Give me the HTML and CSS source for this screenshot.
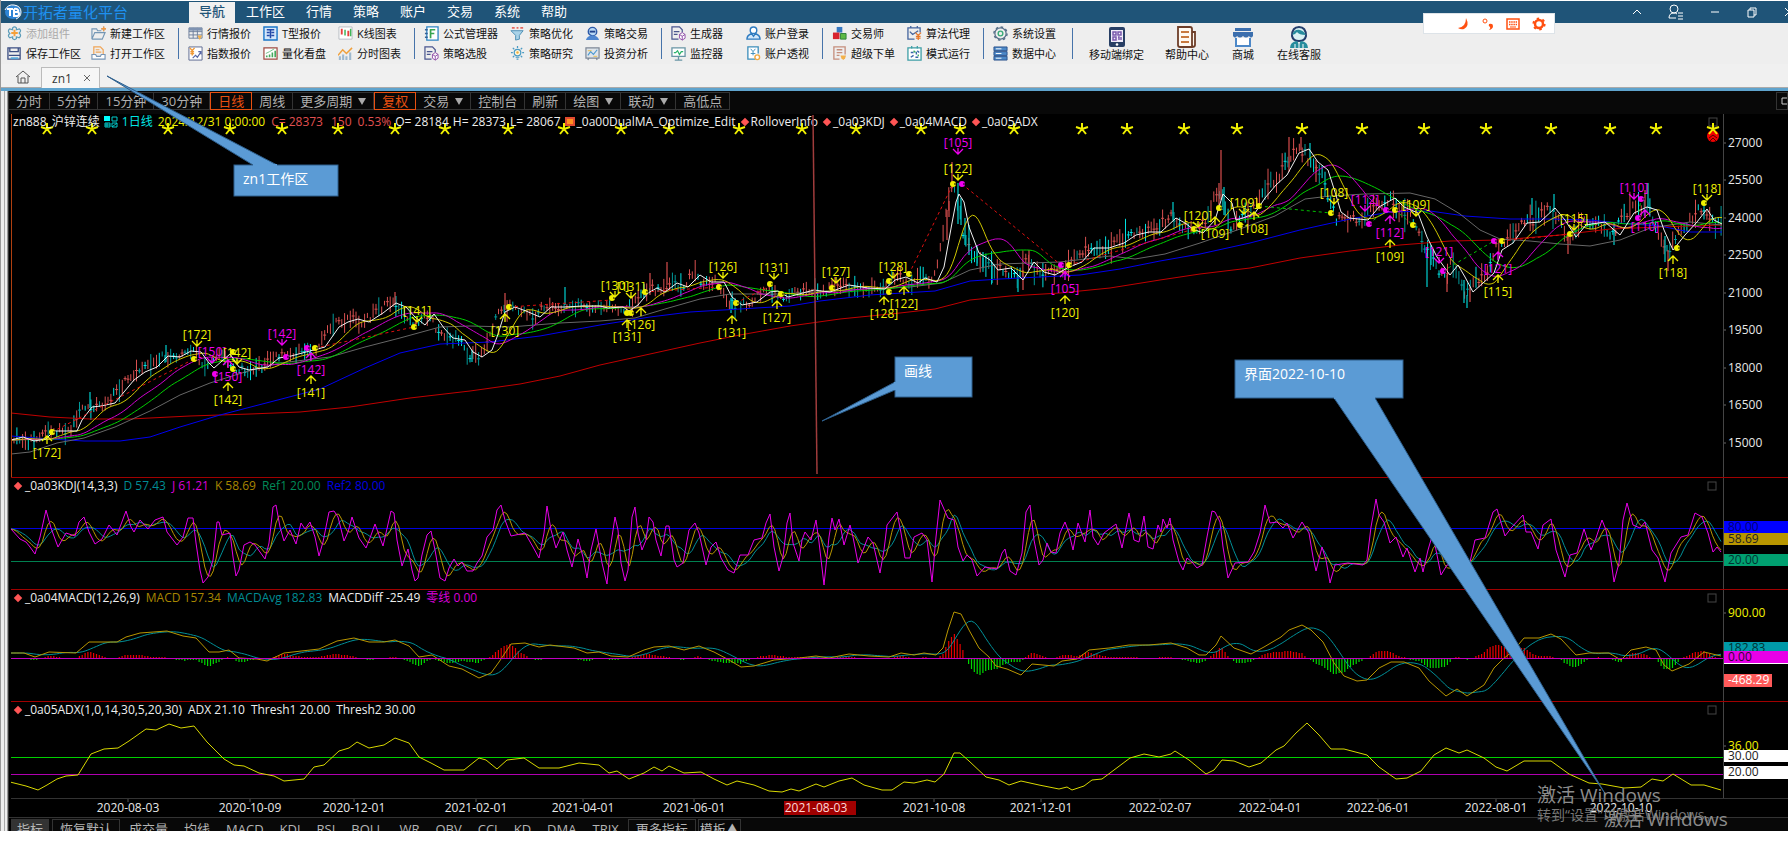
FILE: index.html
```html
<!DOCTYPE html>
<html lang="zh-CN">
<head>
  <meta charset="UTF-8">
  <meta name="viewport" content="width=device-width, initial-scale=1.0">
  <title>开拓者量化平台</title>
  <link rel="stylesheet" href="styles.css">
</head>
<body>
<div class="app" id="app">
  <header class="titlebar">
    <div class="brand">
      <svg width="18" height="16" viewBox="0 0 18 16"><ellipse cx="9" cy="8" rx="8" ry="7" fill="#2f86d6"/><path d="M1 6Q4 0 10 1Q17 2 17 8Q17 13 12 15" fill="none" stroke="#fff" stroke-width="1"/><path d="M3 5h6M6 5v7M10 5v7h3q2 0 2-2t-2-2h-2h2q2 0 1-2t-4-1" fill="none" stroke="#fff" stroke-width="2"/></svg>
      <span>开拓者量化平台</span>
    </div>
    <nav class="menu">
      <button class="active">导航</button>
      <button>工作区</button>
      <button>行情</button>
      <button>策略</button>
      <button>账户</button>
      <button>交易</button>
      <button>系统</button>
      <button>帮助</button>
    </nav>
    <div class="window-tools">
      <button aria-label="收起"><svg width="12" height="12" viewBox="0 0 12 12"><path d="M2 8l4-4 4 4"/></svg></button>
      <button aria-label="用户"><svg width="16" height="16" viewBox="0 0 16 16"><circle cx="6" cy="5" r="4"/><path d="M1 14q0-5 5-5 2 0 3 1M1 14h7M10 9h5M10 12h5M10 15h5"/></svg></button>
      <button aria-label="最小化"><svg width="12" height="12" viewBox="0 0 12 12"><path d="M2 6h8"/></svg></button>
      <button aria-label="还原"><svg width="12" height="12" viewBox="0 0 12 12"><path d="M2 4h6v7h-6zM4 4v-2h6v7h-2"/></svg></button>
      <button aria-label="关闭"><svg width="12" height="12" viewBox="0 0 12 12"><path d="M2 2l8 8M10 2l-8 8"/></svg></button>
    </div>
    <div class="ime">
      <svg width="12" height="12" viewBox="0 0 12 12"><path d="M8 0q4 8-2 11-3 1-6-1Q8 9 8 0z" fill="#ff5011"/></svg>
      <svg width="12" height="12" viewBox="0 0 12 12"><circle cx="3" cy="3" r="2" fill="none" stroke="#ff5011" stroke-width="1"/><path d="M7 6q4-1 4 2t-4 4q2-2 1-3-2-1-1-3z" fill="#ff5011"/></svg>
      <svg width="14" height="12" viewBox="0 0 14 12"><rect x="1" y="1" width="12" height="10" fill="none" stroke="#ff5011" stroke-width="1.5"/><path d="M3 4h8M3 6.500h8" stroke="#ff5011" stroke-width="1.500" stroke-dasharray="1.500 .7"/><path d="M4 9h6" stroke="#ff5011"/></svg>
      <svg width="14" height="14" viewBox="0 0 14 14"><circle cx="7" cy="7" r="4" fill="none" stroke="#ff5011" stroke-width="2.500"/><circle cx="7" cy="7" r="5.600" fill="none" stroke="#ff5011" stroke-width="2" stroke-dasharray="2.400 3.460"/></svg>
    </div>
  </header>

  <div class="ribbon">
    <div class="group">
      <button class="off"><svg viewBox="0 0 16 16"><path d="M6 2q2-2 4 0v2l3-1q3 2 0 4.500 3 3 0 5l-3-1v2q-2 2-4 0v-2l-3 1q-3-2 0-4.500-3-3 0-5l3 1z" fill="none" stroke="#5c9cb8" stroke-width="1.300"/><path d="M8 4v7M4.500 7.500h7" stroke="#f5a03a" stroke-width="2"/></svg>添加组件</button>
      <button><svg viewBox="0 0 16 16"><path d="M1 14V3h5l1 2h4M1 14h11l3-7H4L1 14M11 3h5M13.500 .5v5" fill="none" stroke="#7497b5" stroke-width="1.200"/><path d="M11 3h5M13.500 .5v5" stroke="#f09a45" stroke-width="1.500"/></svg>新建工作区</button>
      <button><svg viewBox="0 0 16 16"><path d="M1 2h13v12H1zM3 2v4h9V2M2 10h12" fill="none" stroke="#3c4f84" stroke-width="1.400"/><path d="M4 13h8" stroke="#58a8d8" stroke-width="2"/></svg>保存工作区</button>
      <button><svg viewBox="0 0 16 16"><path d="M3 9V1h7l3 3v5M5 4h4M5 6.500h6" fill="none" stroke="#f0a557" stroke-width="1.300"/><path d="M1 9h4l1 2h4l1-2h4v5H1z" fill="#fff" stroke="#7795b5" stroke-width="1.200"/></svg>打开工作区</button>
    </div>
    <div class="group">
      <button><svg viewBox="0 0 16 16"><path d="M1 2h14v11H1zM1 6h14M1 9.500h14M5.500 2v11M10 2v11" fill="none" stroke="#6d7f9c"/><path d="M1 2h14v3H1z" fill="#7f93b2"/><path d="M10 10h5l-2.500 5z" fill="#f2b14d"/></svg>行情报价</button>
      <button><svg viewBox="0 0 16 16"><path d="M1 1h14v14H1z" fill="#d5e8fb" stroke="#1b76c8" stroke-width="1.500"/><path d="M4 4h8M8 4v9M4 7h3M9 7h3M4 10h3M9 10h3" stroke="#2449a8" stroke-width="1.600"/></svg>T型报价</button>
      <button><svg viewBox="0 0 16 16"><path d="M1 1h14v13H1z" fill="#fff" stroke="#b7bcc3"/><path d="M4 3v6M11 5v6" stroke="#e8413d" stroke-width="2"/><path d="M7.500 4v6M13.500 3v8" stroke="#41b65a" stroke-width="1.600"/></svg>K线图表</button>
      <button><svg viewBox="0 0 16 16"><path d="M1 1h14v14H1z" fill="#fff" stroke="#5a6790"/><path d="M2 2l2.500 3L7 2M4.500 5v5M2.500 6h4M2.500 8h4" fill="none" stroke="#f19a37" stroke-width="1.500"/><path d="M5 13l3-3 2 2 4-6M11 6h3v3" fill="none" stroke="#5666a5" stroke-width="1.200"/></svg>指数报价</button>
      <button><svg viewBox="0 0 16 16"><path d="M1 2h14v12H1z" fill="#fff" stroke="#a04b42" stroke-width="1.300"/><path d="M4 12v-2M7 12V9M10 12V7M13 12V5" stroke="#43a95c" stroke-width="1.700"/><path d="M3 8l4-2 5-3" fill="none" stroke="#6cbf84"/></svg>量化看盘</button>
      <button><svg viewBox="0 0 16 16"><path d="M0 10l5-6 4 4 6-6" fill="none" stroke="#f0a03c" stroke-width="1.600"/><path d="M2 15v-4M5.500 15V9M9 15v-4M13 15V7" stroke="#9db8ce" stroke-width="2.200"/></svg>分时图表</button>
    </div>
    <div class="group">
      <button><svg viewBox="0 0 16 16"><path d="M3 1h12v14H3z" fill="#fff" stroke="#2f85c4" stroke-width="1.400"/><path d="M1 4h3M1 8h3M1 12h3" stroke="#356195" stroke-width="1.500"/><path d="M7 13V4h5M7 8h4" fill="none" stroke="#37a550" stroke-width="1.800"/></svg>公式管理器</button>
      <button><svg viewBox="0 0 16 16"><path d="M1 5h13l-4 5v4l-4 1v-5z" fill="#a9d2e8" stroke="#4d8fb4"/><path d="M2 2h3M7 2h2M11 2h3" stroke="#e66a60" stroke-width="2"/></svg>策略优化</button>
      <button><svg viewBox="0 0 16 16"><circle cx="8" cy="6" r="4.500" fill="#b9d9f5" stroke="#2d5aa8" stroke-width="1.500"/><path d="M1 15q1-5 7-5t7 5z" fill="#4e86d0"/><path d="M5 6h6" stroke="#20428c" stroke-width="2"/></svg>策略交易</button>
      <button><svg viewBox="0 0 16 16"><path d="M8 14H1V1h8l3 3v3M3 6h6M3 9h4" fill="none" stroke="#4a568f" stroke-width="1.300"/><path d="M12 7l3 2v4l-3 2-3-2V9zM9 9l3 2 3-2M12 11v4" fill="#fff" stroke="#8e4ca8"/></svg>策略选股</button>
      <button><svg viewBox="0 0 16 16"><circle cx="8" cy="7" r="3.500" fill="#fff7dc" stroke="#4a9bc4" stroke-width="1.300"/><path d="M6 12h4M7 14h2M8 0v2M1 7h2M13 7h2M3 2l1.500 1.500M13 2l-1.500 1.500M3 12l1.500-1.500M13 12l-1.500-1.500" stroke="#4a9bc4" stroke-width="1.300"/><circle cx="8" cy="7" r="1.300" fill="#f1ae3f"/></svg>策略研究</button>
      <button><svg viewBox="0 0 16 16"><path d="M1 2h14v11H1zM4 13l-1 2M12 13l1 2" fill="#dfe4ea" stroke="#7d8796" stroke-width="1.300"/><path d="M3 10l3-4 3 3 4-5" fill="none" stroke="#4d9ad0" stroke-width="1.200"/><path d="M3 5h4M9 11h4" stroke="#e9bd49"/></svg>投资分析</button>
    </div>
    <div class="group">
      <button><svg viewBox="0 0 16 16"><path d="M8 14H1V1h8l3 3v3M3 6h6M3 9h4" fill="none" stroke="#4a568f" stroke-width="1.300"/><path d="M12 7l3 2v4l-3 2-3-2V9zM9 9l3 2 3-2M12 11v4" fill="#fff" stroke="#8e4ca8"/></svg>生成器</button>
      <button><svg viewBox="0 0 16 16"><circle cx="8" cy="4.500" r="3.500" fill="#fff" stroke="#2e7bc0" stroke-width="1.500"/><path d="M1 14q0-4 5-6l2 3 2-3q5 2 5 6z" fill="#d3e8fa" stroke="#2e7bc0" stroke-width="1.500"/></svg>账户登录</button>
      <button><svg viewBox="0 0 16 16"><path d="M1 2h14v9H1zM4 15h8M8 11v4" fill="#fff" stroke="#6895a5" stroke-width="1.400"/><path d="M3 7h2l2-2 2 4 2-3h2" fill="none" stroke="#2bb26b" stroke-width="1.300"/></svg>监控器</button>
      <button><svg viewBox="0 0 16 16"><path d="M10 14H2V1h11v7" fill="#fff" stroke="#3c8ebb" stroke-width="1.400"/><path d="M5 3l2.500 3L10 3M7.500 6v4M5 8h5" fill="none" stroke="#3c8ebb"/><circle cx="12" cy="12" r="2.500" fill="#fff" stroke="#efa943" stroke-width="1.500"/></svg>账户透视</button>
    </div>
    <div class="group">
      <button><svg viewBox="0 0 16 16"><path d="M5 1h6v6H5z" fill="#3677c0"/><path d="M1 7h7v7H1z" fill="#d8232f"/><path d="M9 8h6v6H9z" fill="#5db944" stroke="#2d7f38"/></svg>交易师</button>
      <button><svg viewBox="0 0 16 16"><path d="M8 14H1V2h13v5M4 2V0M11 2V0M3 6l3 3 6-4" fill="none" stroke="#44659e" stroke-width="1.400"/><path d="M9 7l3 3 3-3M12 10v5M9.500 11h5M9.500 13h5" stroke="#e87728" stroke-width="1.300" fill="none"/></svg>算法代理</button>
      <button><svg viewBox="0 0 16 16"><path d="M8 14H2V1h12v8M5 4h6M5 7h6M5 10h3" fill="none" stroke="#c58e7c" stroke-width="1.400"/><path d="M9 10h6l-1 3-2 2-2-2z" fill="#f3b04a"/></svg>超级下单</button>
      <button><svg viewBox="0 0 16 16"><path d="M1 2h14v13H1zM5 0v3M11 0v3" fill="#fff" stroke="#3f9fa6" stroke-width="1.400"/><path d="M4 7h3M4 12l3-2M10 6v3M9 12h3M11 5l2 2" stroke="#3766a8" stroke-width="1.500"/><path d="M7 5l2 2M12 9v2" stroke="#3fae67" stroke-width="1.500"/></svg>模式运行</button>
    </div>
    <div class="group">
      <button><svg viewBox="0 0 16 16"><circle cx="8" cy="8" r="6" fill="none" stroke="#566f88" stroke-width="1.300"/><circle cx="8" cy="8" r="7" fill="none" stroke="#566f88" stroke-width="1.500" stroke-dasharray="2.700 2.790"/><circle cx="8" cy="8" r="2.500" fill="none" stroke="#3bac79" stroke-width="1.500"/></svg>系统设置</button>
      <button><svg viewBox="0 0 16 16"><path d="M1 1h14v4H1zM1 6h14v4H1zM1 11h14v4H1z" fill="#4c89c8" stroke="#2b528c"/><path d="M3 3h6M3 8h6M3 13h6" stroke="#fff"/></svg>数据中心</button>
    </div>
    <div class="big-group">
      <button><svg viewBox="0 0 22 22"><rect x="3" y="1" width="16" height="20" rx="2" fill="#283f65"/><path d="M5 4h12v12H5z" fill="#f1ecfa"/><path d="M7 6h3v3H7zM12 6h3v3h-3zM7 11h3v3H7zM12 11h1v3M15 11v3" fill="none" stroke="#7959ad" stroke-width="1.500"/><circle cx="11" cy="18.500" r="1.300" fill="#fff"/></svg>移动端绑定</button>
      <button><svg viewBox="0 0 22 22"><path d="M2 1h12q2 0 2 2v18H4q-2 0-2-2zM16 6h3v13q0 2-3 2" fill="#fff9f2" stroke="#6d3d28" stroke-width="1.800"/><path d="M5 6h8M5 11h8M5 16h8" stroke="#c8793f" stroke-width="1.800"/></svg>帮助中心</button>
      <button><svg viewBox="0 0 22 22"><path d="M3 2h16v3H3z" fill="#3c6fae"/><path d="M1 6h20v4q-2 3-4 0-3 3-6 0-3 3-6 0-2 3-4 0z" fill="#3c6fae"/><path d="M4 12v8h14v-8" fill="#fff" stroke="#4d88c8" stroke-width="2"/></svg>商城</button>
      <button><svg viewBox="0 0 22 22"><path d="M4 10q0-9 7-9t7 9q-1 5-7 5t-7-5z" fill="#d9f1f3" stroke="#243e6c" stroke-width="2"/><path d="M4 9q2-6 8-5 4 1 6 5-7 0-9-3-2 3-5 3z" fill="#278c9d"/><path d="M2 22q0-6 7-7l2 3 2-3q7 1 7 7z" fill="#278c9d"/><path d="M11 17v5M7 18v4M15 18v4" stroke="#fff"/></svg>在线客服</button>
    </div>
  </div>

  <div class="tabs">
    <button class="home" aria-label="首页"><svg width="16" height="14" viewBox="0 0 16 14"><path d="M1 7l7-6 7 6M3 6v7h10V6M6 13V8h4v5" fill="none" stroke="#555" stroke-width="1"/></svg></button>
    <button class="tab">zn1 <svg width="8" height="8" viewBox="0 0 8 8"><path d="M1 1l6 6M7 1l-6 6" stroke="#666" stroke-width="1"/></svg></button>
  </div>

  <main class="workspace">
    <div class="toolbar">
      <button>分时</button><button>5分钟</button><button>15分钟</button><button>30分钟</button><button class="on">日线</button><button>周线</button><button>更多周期<i></i></button><button class="on">复权</button><button>交易<i></i></button><button>控制台</button><button>刷新</button><button>绘图<i></i></button><button>联动<i></i></button><button>高低点</button>
      <button class="restore" aria-label="最大化"><svg width="10" height="8" viewBox="0 0 10 8"><path d="M1 1h8v6H1z" fill="none" stroke="#ccc"/></svg></button>
    </div>

    <section class="panel price">
      <div class="legend legend-price">
        <span>zn888_沪锌连续</span>
        <svg width="14" height="12" viewBox="0 0 14 12"><path d="M0 0h6v5H0z" fill="#0ff"/><path d="M8 1h5v4H8zM1 7h5v4H1zM8 7h5v4H8zM3 7v4M1 9h5M8 11l5-4" fill="none" stroke="#0cc"/></svg>
        <span class="cyan">1日线</span>
        <span class="yellow date">2024/12/31 0:00:00</span>
        <span class="coral">C= 28373</span><span class="coral gap">150</span><span class="coral">0.53%</span>
        <span>O= 28184</span><span>H= 28373</span><span>L= 28067</span>
        <span class="study"><b class="square"></b>_0a00DualMA_Optimize_Edit</span>
        <span class="study"><b></b>RolloverInfo</span>
        <span class="study"><b></b>_0a03KDJ</span>
        <span class="study"><b></b>_0a04MACD</span>
        <span class="study"><b></b>_0a05ADX</span>
      </div>
      <svg class="plot" id="price"></svg>
      <svg class="axis" id="priceAxis"></svg>
    </section>

    <section class="panel">
      <div class="legend"><span class="study"><b></b>_0a03KDJ(14,3,3)</span><span class="teal">D 57.43</span><span class="magenta">J 61.21</span><span class="gold">K 58.69</span><span class="green">Ref1 20.00</span><span class="blue">Ref2 80.00</span></div>
      <svg class="plot" id="kdj"></svg>
      <svg class="axis" id="kdjAxis"></svg>
    </section>

    <section class="panel">
      <div class="legend"><span class="study"><b></b>_0a04MACD(12,26,9)</span><span class="gold">MACD 157.34</span><span class="teal">MACDAvg 182.83</span><span>MACDDiff -25.49</span><span class="magenta">零线 0.00</span></div>
      <svg class="plot" id="macd"></svg>
      <svg class="axis" id="macdAxis"></svg>
    </section>

    <section class="panel adx">
      <div class="legend"><span class="study"><b></b>_0a05ADX(1,0,14,30,5,20,30)</span><span>ADX 21.10</span><span>Thresh1 20.00</span><span>Thresh2 30.00</span></div>
      <svg class="plot" id="adx"></svg>
      <svg class="axis" id="adxAxis"></svg>
    </section>

    <svg class="dates" id="dates"></svg>

    <footer class="indicators">
      <button class="on">指标</button><button class="boxed">恢复默认</button><button>成交量</button><button>均线</button><button>MACD</button><button>KDJ</button><button>RSI</button><button>BOLL</button><button>WR</button><button>OBV</button><button>CCI</button><button>KD</button><button>DMA</button><button>TRIX</button><button class="boxed">更多指标</button><button class="boxed tight">模板▲</button>
    </footer>
  </main>

  <svg class="notes" id="notes"></svg>
</div>
<script src="charts.js"></script>
</body>
</html>
```
FILE: styles.css
```css
* { box-sizing: border-box; }
body {
  margin: 0;
  background: #fff;
  font-family: "Open Sans", "Noto Sans CJK SC", sans-serif;
  font-size: 12px;
}
button {
  font: inherit;
  color: inherit;
  background: none;
  border: 0;
  padding: 0;
  margin: 0;
  white-space: nowrap;
}
.app {
  position: relative;
  overflow: hidden;
  padding-top: 1px;
  border-left: 1px solid #999;
}

/* title bar */
.titlebar {
  position: relative;
  display: flex;
  height: 22px;
  background: #1f5478;
  color: #fff;
}
.brand {
  display: flex;
  align-items: center;
  gap: 1px;
  width: 188px;
  padding-left: 3px;
  font-size: 15px;
  line-height: 20px;
  color: #1e90f0;
}
.menu { display: flex; gap: 1px; }
.menu button {
  padding: 0 10px 3px;
  font-size: 13px;
  line-height: 18px;
}
.menu .active {
  margin-top: 1px;
  background: #f0f0f0;
  color: #1f5478;
  font-weight: 500;
}
.window-tools {
  display: flex;
  align-items: center;
  gap: 25px;
  margin-left: auto;
  margin-right: -7px;
}
.window-tools svg {
  display: block;
  fill: none;
  stroke: #fff;
}
.ime {
  position: absolute;
  z-index: 2;
  top: 12px;
  right: 233px;
  display: flex;
  align-items: center;
  justify-content: flex-end;
  gap: 12px;
  width: 132px;
  height: 21px;
  padding-right: 8px;
  background: #fff;
  border: 1px solid #dde3e8;
}

/* ribbon */
.ribbon {
  display: flex;
  align-items: center;
  height: 41px;
  background: #eee;
  color: #111;
  font-size: 11px;
}
.group {
  display: grid;
  grid-template-columns: repeat(3, max-content);
  column-gap: 12px;
  row-gap: 4px;
  padding: 0 13px 0 9px;
  border-right: 1px solid #4673aa;
  height: 31px;
  align-content: center;
}
.group:first-child { padding-left: 6px; column-gap: 10px; }
.group:first-child, .group:nth-child(4), .group:nth-child(5) { grid-template-columns: repeat(2, max-content); }
.group:nth-child(6) { grid-template-columns: max-content; padding-right: 16px; }
.group button {
  display: flex;
  align-items: center;
  gap: 4px;
  height: 16px;
  min-width: 63px;
  line-height: 16px;
}
.group svg { width: 15px; height: 15px; }
.off { color: #aaa; }
.big-group {
  display: flex;
  gap: 21px;
  padding-left: 16px;
}
.big-group button {
  display: flex;
  flex-direction: column;
  align-items: center;
  min-width: 26px;
  line-height: 14px;
}
.big-group svg { width: 22px; height: 22px; }

/* workspace tabs */
.tabs {
  display: flex;
  align-items: flex-end;
  height: 24px;
  padding-left: 4px;
  background: #f0f0f0;
  border-bottom: 1px solid #aaa;
  color: #333;
}
.home { width: 36px; height: 20px; }
.home svg { display: block; margin: auto; }
.tab {
  display: flex;
  align-items: center;
  justify-content: space-between;
  width: 59px;
  height: 21px;
  margin-bottom: -1px;
  padding: 0 8px 0 10px;
  border: 1px solid #bbb;
  border-bottom: 0;
  background: #f6f6f6;
}

/* chart window */
.workspace {
  padding-left: 8px;
  background: linear-gradient(90deg, #eee 0 3px, #aaa 3px 4px, #eee 4px 6px, #999 6px 7px, #333 7px 8px, #000 8px);
  border-top: 3px solid #5fa3cd;
  color: #eee;
}
.toolbar {
  display: flex;
  height: 23px;
  padding-top: 1px;
  background: #080808;
  color: #b0b0b0;
  font-size: 13px;
}
.toolbar button {
  display: flex;
  align-items: center;
  gap: 6px;
  height: 18px;
  padding: 0 7px;
  line-height: 16px;
  border: 1px solid #333;
  border-left-width: 0;
}
.toolbar i {
  border: 4px solid transparent;
  border-top: 7px solid #aaa;
  border-bottom: 0;
}
.toolbar .on {
  color: #e85010;
  border: 1px solid #e85010;
}
.toolbar .restore {
  margin-left: auto;
  width: 12px;
  padding: 0 4px;
  border-left-width: 1px;
  overflow: hidden;
}
.restore svg { flex: none; }

.panel {
  position: relative;
  display: flex;
  height: 112px;
  margin-left: 2px;
  border-bottom: 1px solid #a00000;
}
.price { height: 364px; }
.adx { height: 97px; border-bottom-color: #333; }
.plot { flex: 1; min-width: 0; height: 100%; }
.price .plot { border-left: 1px solid #b04010; }
.axis { width: 65px; height: 100%; border-left: 1px solid #444; }
.axis text, .dates text, .plot text { font-size: 12px; }
.legend {
  position: absolute;
  top: 0;
  left: 2px;
  display: flex;
  gap: 6px;
  line-height: 15px;
  white-space: nowrap;
}
.legend .study { display: flex; align-items: center; }
.legend b {
  width: 6px;
  height: 6px;
  margin: 0 4px 0 2px;
  background: #ff5555;
  transform: rotate(45deg);
}
.legend .square { width: 10px; height: 9px; transform: none; margin: 0 2px 0 0; background: #ff9020; border: 2px solid #e04a30; }
.legend-price { align-items: center; gap: 4px; }
.legend-price b { margin-right: 3px; }
.legend-price .date { margin: 0 2px 0 1px; }
.legend-price .gap { margin: 0 2px 0 4px; }
.cyan { color: #00e5e5; }
.yellow { color: #f0f000; }
.coral { color: #e05050; }
.teal { color: #008c94; }
.magenta { color: #d800d8; }
.gold { color: #a88600; }
.green { color: #008a58; }
.blue { color: #0000e0; }

.dates { display: block; width: 100%; height: 19px; border-bottom: 1px solid #333; }
.indicators {
  display: flex;
  align-items: flex-start;
  gap: 2px;
  height: 13px;
  margin-left: 2px;
  padding-top: 1px;
  overflow: hidden;
  background: #080808;
  color: #b5b5b5;
  font-size: 13px;
}
.indicators button { height: 20px; padding: 0 7px; line-height: 18px; }
.indicators .on { background: #333; margin-right: 1px; padding: 0 6px; }
.indicators .boxed { border: 1px solid #333; }
.indicators .tight { padding: 0 1px; }

/* callouts and watermark over the whole window */
.notes {
  position: absolute;
  inset: 0;
  width: 100%;
  height: 100%;
  pointer-events: none;
}
.notes .callout { font-size: 14px; fill: #fff; }
.notes .mark { font-size: 19px; fill: #8c8c8c; }
.notes .mark-small { font-size: 14px; fill: #777; }
```
FILE: charts.js
```javascript
// Points are kept in window units: x runs 12..1722, y is the height in the window.
const LEFT = 12, RIGHT = 1722, STEP = 2.85;

const parse = s => s.trim().split(/\s+/).map(p => p.split(",").map(Number));

const fast = parse(`11,440 23,437 34,441 46,439 54,431 77,431 82,420 92,407 101,406 115,403 124,392 134,380 145,372 157,367 168,356 180,357 191,351 201,352 209,363 214,368 222,361 230,354 239,367 249,370 268,367 279,358 291,356 306,352 325,347 339,327 348,322 358,319 369,322 383,313 396,303 406,307 415,317 425,325 434,314 444,328 453,338 465,340 473,352 482,357 492,350 497,337 505,312 515,307 526,311 540,317 551,307 566,307 582,306 600,306
608,308 623,307 629,311 638,305 648,293 657,288 665,292 677,283 688,287 700,275 711,282 724,282 732,297 742,305 757,302 770,292 778,291 788,297 814,290 830,292 849,285 868,288 885,289 895,280 906,277 918,283 925,278 937,282 944,267 952,223 956,202 959,194 964,202 969,227 979,253 990,260 998,270 1011,268 1023,280 1034,262 1044,272 1055,275 1069,267 1082,262 1094,248 1109,248 1124,243 1136,235 1149,232 1161,232 1176,218 1185,223 1193,229
1203,233 1215,220 1223,194 1232,203 1236,220 1243,218 1255,213 1265,198 1276,185 1287,175 1299,153 1309,149 1318,162 1328,170 1335,192 1341,212 1349,218 1368,220 1379,207 1395,198 1404,207 1418,213 1427,237 1437,257 1450,275 1458,265 1465,277 1473,292 1483,283 1494,273 1502,250 1513,243 1527,223 1540,222 1555,208 1565,220 1576,237 1586,225 1605,222 1620,235 1634,213 1647,207 1657,210 1664,230 1673,250 1685,235 1697,222 1707,209 1714,220 1722,224`);

const grey = parse(`11,454 30,452 57,443 84,438 115,427 150,411 180,395 210,383 245,372 280,363 330,357 365,347 400,338 440,327 470,326 510,327 560,323 600,321 635,318 665,309 700,299 730,294 780,294 850,290 910,287 942,283 970,270 1000,264 1060,262 1110,256 1135,259 1165,254 1200,243 1240,229 1275,216 1305,199 1330,196 1365,194 1410,193 1435,199 1460,214 1480,230 1500,239 1530,241 1560,244 1590,246 1620,240 1650,228 1690,222 1722,225`);
const blue = parse(`11,436 50,439 84,441 120,441 150,437 180,427 220,415 270,402 320,389 365,368 400,353 440,344 490,342 540,336 600,325 650,317 690,312 740,309 790,306 820,301 870,295 935,291 970,281 1000,279 1040,277 1080,275 1120,269 1160,261 1200,254 1250,243 1300,230 1350,219 1390,212 1430,211 1465,216 1510,219 1550,219 1590,220 1620,223 1660,226 1690,232 1722,232`);
const red = parse(`11,413 50,417 90,419 130,419 190,416 250,414 300,412 350,407 410,398 470,391 520,384 560,376 600,365 650,354 700,343 740,335 790,326 840,319 900,313 935,309 970,300 1010,296 1060,293 1110,288 1160,280 1200,274 1250,268 1300,258 1350,251 1400,245 1450,241 1500,240 1560,235 1610,229 1660,227 1722,225`);

// long wicks: x, top, bottom, up
const wicks = [[90,392,408,0],[166,345,362,0],[395,292,305,1],[505,293,310,1],[472,350,362,0],[565,287,305,0],[667,262,285,1],[650,273,295,1],[731,298,313,0],
  [947,210,240,1],[949,201,217,1],[952,162,184,1],[958,183,224,0],[961,198,225,0],[965,218,245,0],[969,225,255,0],[977,245,266,0],[983,252,268,0],[992,262,283,0],[1018,275,292,0],[1023,270,290,1],[1029,250,265,1],
  [1173,202,220,0],[1219,183,205,1],[1221,150,200,1],[1224,187,215,0],[1289,137,172,1],[1301,137,150,1],[1310,143,160,0],[1316,160,182,1],[1427,253,287,0],[1431,245,265,0],[1447,275,292,1],[1464,280,303,0],[1467,295,308,0],[1470,287,302,1],
  [1532,198,215,0],[1554,194,212,0],[1568,235,254,1],[1614,222,245,0],[1648,183,207,0],[1645,190,208,1],[1665,236,262,0],[1668,250,271,1]];

const stars = [47,92,168,230,282,338,395,445,508,564,621,669,739,802,856,921,960,1014,1082,1127,1184,1237,1302,1362,1424,1486,1551,1610,1656,1713];

// trade tags: x, y, length in days, direction, colour (y long, m hedge)
const tags = [[47,453,172,"u","y"],[197,335,172,"d","y"],[212,352,150,"d","m"],[237,353,142,"d","y"],[228,377,150,"u","m"],[228,400,142,"u","y"],[282,334,142,"d","m"],[311,370,142,"u","m"],[311,393,141,"u","y"],[417,311,141,"d","y"],[505,331,130,"u","y"],
  [615,286,130,"d","y"],[631,287,131,"d","y"],[641,325,126,"u","y"],[627,337,131,"u","y"],[723,267,126,"d","y"],[732,333,131,"u","y"],[774,268,131,"d","y"],[777,318,127,"u","y"],[836,272,127,"d","y"],[893,267,128,"d","y"],[884,314,128,"u","y"],[904,304,122,"u","y"],[958,143,105,"d","m"],[958,169,122,"d","y"],[1065,289,105,"u","m"],[1065,313,120,"u","y"],
  [1198,216,120,"d","y"],[1215,234,109,"u","y"],[1244,203,109,"d","y"],[1254,229,108,"u","y"],[1334,193,108,"d","y"],[1365,200,112,"d","m"],[1390,233,112,"u","m"],[1390,257,109,"u","y"],[1416,205,109,"d","y"],[1439,252,121,"d","m"],[1498,269,121,"u","m"],[1498,292,115,"u","y"],[1574,219,115,"d","y"],[1634,188,110,"d","m"],[1645,227,110,"u","m"],[1673,273,118,"u","y"],[1707,189,118,"d","y"]];

const fills = {
  y: parse("52,432 194,359 233,352 233,369 315,348 414,327 509,307 612,298 627,313 631,313 645,292 719,287 736,303 770,284 781,294 832,288 889,281 889,292 909,274 953,184 1069,265 1194,229 1219,208 1240,225 1259,206 1331,213 1395,210 1413,225 1502,241 1570,234 1677,248 1704,203"),
  m: parse("215,374 286,357 307,348 962,184 1061,265 1369,224 1386,210 1443,271 1494,241 1638,218 1641,199")
};

const trades = {
  "#e01010": ["52,432 194,359", "315,348 414,327", "509,307 612,300", "645,292 719,287", "736,303 770,286", "909,274 953,184", "962,184 1061,265", "1069,265 1194,229", "1502,241 1570,234"],
  "#00c000": ["1259,206 1331,213", "1369,224 1386,210", "1395,210 1413,225", "1443,271 1494,241", "1638,218 1641,199"]
};

const kdjJ = parse(`12,529 21,539 27,542 31,547 36,554 41,537 47,510 52,528 59,547 67,533 76,536 80,522 85,517 90,532 96,544 103,539 110,525 118,535 127,511 132,527 135,532 141,520 149,529 156,520 164,517 168,532 178,545 184,537 189,518 194,518 197,543 201,570 204,583 209,577 214,560 218,522 220,522 223,535 231,533 234,557 237,576 240,570 245,545 251,542 256,545 266,559 270,543 274,507 277,505 281,527 285,541 291,530 297,544 302,523 306,529 311,522 316,537 320,556 324,542 330,512 335,511 339,517 345,541 349,532 353,517 360,538 367,548 371,538 376,524 384,546 387,533 392,511 395,513 398,540 403,566 409,549 413,570 416,581 419,578 423,555 428,535 432,531 436,550 441,578 446,581 450,568 455,559 459,566 463,562 468,571 474,571 478,563 483,556 488,537 494,530 498,510 502,505 506,520 512,536 526,533 534,547 540,558 545,533 548,506 552,530 557,548 564,532 568,550 573,567 579,539 584,557 588,578 592,550 597,529
603,563 608,584 611,550 616,517 619,530 622,563 626,581 629,570 633,517 636,507 639,533 643,550 647,540 650,517 654,522 657,540 662,556 667,526 670,526 675,560 678,567 684,563 690,530 696,523 700,533 707,565 712,547 717,542 722,558 729,570 735,573 741,555 749,555 755,540 763,538 767,523 771,514 775,547 780,571 784,557 788,523 791,513 794,543 800,561 803,540 806,532 812,540 817,520 820,542 825,585 830,537 833,518 836,530 840,519 845,545 851,525 854,537 859,563 864,550 869,537 874,543 881,573 885,550 888,525 898,512 902,533 906,558 911,558 915,537 923,533 928,540 933,582 937,537 941,500 949,518 955,520 959,547 964,561 968,555 973,560 978,576 986,567 998,569 1003,553 1006,549 1011,571 1017,575 1023,553 1027,512 1031,505 1035,540 1040,565 1044,560 1048,543 1052,552 1057,553 1061,533 1066,522 1070,533 1074,550 1079,523 1086,542 1091,510 1094,537 1099,545 1105,533 1117,524 1123,548 1130,513 1135,540 1140,542 1145,516 1149,547 1154,549 1159,525 1162,532 1164,519 1168,528 1171,518 1174,540 1180,562 1184,570 1188,558 1193,562
1198,568 1203,565 1208,537 1213,511 1216,512 1221,522 1224,547 1229,578 1236,563 1249,562 1255,552 1261,533 1266,505 1271,523 1278,522 1284,528 1288,523 1294,538 1303,522 1310,533 1314,557 1317,571 1323,547 1327,560 1331,583 1336,565 1349,563 1364,565 1368,560 1372,527 1377,499 1380,515 1385,522 1391,543 1397,537 1404,557 1408,548 1416,572 1421,558 1424,572 1429,550 1434,533 1437,550 1442,575 1448,565 1471,562 1476,540 1486,538 1494,512 1498,509 1506,536 1513,527 1524,515 1527,532 1532,532 1539,549 1544,525 1552,519 1557,550 1566,577 1571,555 1578,553 1585,529 1592,550 1597,538 1603,520 1607,530 1611,553 1615,582 1620,563 1624,520 1628,503 1634,525 1641,528 1646,522 1653,550 1659,558 1666,582 1672,553 1682,537 1689,535 1696,513 1703,517 1709,533 1714,552 1718,547 1722,552`);

const macd = parse(`11,653 25,653 36,657 50,652 77,653 90,642 118,642 127,637 141,633 168,631 184,636 197,638 210,652 220,652 230,650 240,658 258,659 268,661 285,653 320,649 338,641 355,638 370,642 385,642 396,640 410,646 420,657 433,655 450,666 463,669 480,678 492,673 500,662 512,644 526,643 540,647 551,645 575,648 588,653 600,652 612,656 629,657 645,650 655,647 670,646 685,650 700,646 715,652 730,660 742,667 755,666 775,660 800,658 817,656 830,658 850,654 870,656 890,657 902,653 915,655 925,653 937,655 944,648 949,630 955,612 962,614 970,630 980,648 990,657 997,666 1008,669 1022,675 1033,664 1055,666 1063,661 1078,659 1090,650 1110,648 1130,645 1150,645 1172,643 1188,648 1200,655 1207,655 1217,645 1222,636 1235,648 1252,654 1265,647 1282,637 1290,630 1303,625 1312,630 1324,642 1335,663 1345,676 1358,681 1368,680 1380,668 1392,662 1405,662 1420,668 1430,681 1447,696 1458,689 1468,696 1485,685 1495,668 1503,660 1515,650 1525,638 1540,638 1552,634 1562,639 1577,655 1590,653 1610,653 1622,660 1632,650 1647,647 1657,650 1665,665 1673,671 1690,664 1705,652 1722,656`);

const adx = parse(`11,782 27,786 39,790 48,785 58,779 67,776 79,775 92,754 105,749 119,748 130,741 147,729 157,730 170,724 182,728 195,726 208,742 225,759 235,765 245,766 260,773 275,776 285,781 305,779 315,767 325,765 340,751 350,748 358,742 370,748 385,745 396,738 410,743 420,757 432,763 445,770 465,770 480,758 487,760 498,769 508,760 525,758 540,768 560,768 580,763 600,765 610,773 618,771 630,779 645,773 655,767 663,771 670,766 685,773 702,772 715,779 728,785 738,781 755,785 770,791 783,792 792,789 800,791 817,784 825,787 840,781 853,778 865,785 883,790 893,790 905,782 915,783 928,780 936,782 945,774 955,753 961,753 970,761 987,777 1000,780 1010,785 1022,781 1040,785 1060,789 1068,787 1073,790 1085,786 1093,780 1103,779 1115,770 1131,758 1145,754 1160,757 1172,754 1176,751 1190,760 1207,774 1215,770 1223,760 1235,761 1250,767 1262,763 1277,750 1285,746 1297,733 1308,723 1320,735 1332,749 1345,749 1368,755 1380,767 1397,779 1408,778 1422,771 1435,755 1447,748 1460,753 1468,750 1485,758 1497,767 1508,771 1525,761 1552,761 1570,774 1590,783 1603,784 1625,788 1642,787 1653,779 1664,781 1674,774 1692,785 1705,785 1722,790`);

const dates = [["2020-08-03",128],["2020-10-09",250],["2020-12-01",354],["2021-02-01",476],["2021-04-01",583],["2021-06-01",694],["2021-10-08",934],["2021-12-01",1041],["2022-02-07",1160],["2022-04-01",1270],["2022-06-01",1378],["2022-08-01",1496],["2022-10-10",1621]];

function at(pts, x) {
  if (x <= pts[0][0]) return pts[0][1];
  for (let i = 1; i < pts.length; i++) {
    if (x <= pts[i][0]) {
      const [x0, y0] = pts[i - 1], [x1, y1] = pts[i];
      return y0 + (y1 - y0) * (x - x0) / (x1 - x0);
    }
  }
  return pts[pts.length - 1][1];
}

// trailing average over w units
function average(pts, w) {
  const out = [];
  for (let x = LEFT; x <= RIGHT; x += STEP) {
    let sum = 0, n = 0;
    for (let k = 0; k <= w; k += STEP) { sum += at(pts, x - k); n++; }
    out.push([x, sum / n]);
  }
  return out;
}

let seed = 7;
function rand() {
  seed = (seed * 16807) % 2147483647;
  return seed / 2147483647;
}

let scale = 1;
const X = x => ((x - LEFT) * scale).toFixed(1);
const line = (pts, color, extra = "") =>
  `<polyline points="${pts.map(p => X(p[0]) + "," + p[1].toFixed(1)).join(" ")}" fill="none" stroke="${color}" ${extra}/>`;
const level = (y, color) => `<path d="M0 ${y}H${X(RIGHT + 2)}" stroke="${color}"/>`;
const box = y => `<rect x="${X(1713) - 4}" y="${y}" width="8" height="8" fill="none" stroke="#444"/>`;

function put(id, top, html) {
  const el = document.getElementById(id);
  const r = el.getBoundingClientRect();
  el.setAttribute("viewBox", `0 ${top} ${el.clientWidth || r.width} ${el.clientHeight || r.height}`);
  el.innerHTML = html;
}

function drawPrice() {
  seed = 7;
  let s = "";
  for (let x = LEFT + 2; x < RIGHT; x += STEP) {
    const lead = at(fast, x + 5), slope = at(fast, x + 9) - at(fast, x);
    const wild = x > 940 ? 1.5 : 1.1;
    const up = rand() < (slope < -1 ? 0.7 : slope > 1 ? 0.3 : 0.5);
    const mid = lead + (rand() - 0.5) * 7 * wild + slope * 0.3;
    const half = (2 + rand() * rand() * 10) * wild;
    const c = up ? "#d85050" : rand() < 0.6 ? "#00e0e0" : "#009a9a";
    s += `<path d="M${X(x)} ${(mid - half).toFixed(1)}v${(half * 2).toFixed(1)}" stroke="${c}"/>`;
    if (rand() < 0.4) s += `<path d="M${X(x - 1.5)} ${mid.toFixed(1)}h3" stroke="${c}"/>`;
  }
  wicks.forEach(w => s += `<path d="M${X(w[0])} ${w[1]}V${w[2]}" stroke="${w[3] ? "#c84848" : "#00c0c0"}" stroke-width="1.300"/>`);
  s += line(red, "#c00000") + line(blue, "#0000f0") + line(grey, "#666");
  s += line(average(fast, 85), "#00d000") + line(average(fast, 55), "#d000d0") + line(average(fast, 24), "#d0c800") + line(fast, "#f0f0f0");
  for (const color in trades) trades[color].forEach(t => s += line(parse(t), color, 'stroke-dasharray="3 3"'));
  const tint = { y: "#f0f000", m: "#f000f0" };
  for (const k in fills) fills[k].forEach(([x, y]) => s += `<circle cx="${X(x)}" cy="${y}" r="3" fill="${tint[k]}"/><path d="M${X(x + 1)} ${y}h3" stroke="#000"/>`);
  tags.forEach(([x, y, n, dir, k]) => {
    const c = tint[k], p = X(x);
    s += `<text x="${p}" y="${y + 4}" text-anchor="middle" fill="${c}">[${n}]</text>`;
    s += dir === "d"
      ? `<path d="M${p} ${y + 5}v6M${p - 5} ${y + 6}l5 5 5-5" fill="none" stroke="${c}" stroke-width="1.300"/>`
      : `<path d="M${p} ${y - 9}v-8M${p - 5} ${y - 12}l5-5 5 5" fill="none" stroke="${c}" stroke-width="1.300"/>`;
  });
  s += box(118);
  s += `<circle cx="${X(1713)}" cy="136" r="6" fill="#f00000"/><path d="M${X(1713) - 4} 138l4-3 4 3M${X(1713) - 3} 141l3-3 3 3" fill="none" stroke="#500"/>`;
  stars.forEach(x => s += `<path d="M${X(x)} 129v-6M${X(x)} 129l6-2M${X(x)} 129l-6-2M${X(x)} 129l4 5M${X(x)} 129l-4 5" stroke="#f0f000" stroke-width="2"/>`);
  put("price", 114, s);

  let a = "";
  for (let v = 27000; v >= 15000; v -= 1500) {
    const y = 143 + (27000 - v) * 0.02497;
    a += `<path d="M0 ${y.toFixed(0)}h2" stroke="#666"/><text x="4" y="${(y + 4).toFixed(0)}" fill="#e8e8e8">${v}</text>`;
  }
  put("priceAxis", 114, a);
}

const tag = (y, h, bg, text, color, w = 65) =>
  `<rect x="0" y="${y}" width="${w}" height="${h}" fill="${bg}"/><text x="4" y="${y + 10}" fill="${color}">${text}</text>`;

function drawStudies() {
  put("kdj", 478, level(528.5, "#0000e0") + level(561.5, "#008050") + line(average(kdjJ, 18), "#009098") + line(average(kdjJ, 10), "#b89600") + line(kdjJ, "#e800e8") + box(482));
  put("kdjAxis", 478, tag(521, 12, "#0000ff", "80.00", "#000070") + tag(533, 12, "#b89600", "58.69", "#222") + tag(554, 12, "#00a070", "20.00", "#033"));

  const avg = average(macd, 24);
  let bars = "";
  avg.forEach(([x, y]) => {
    const d = Math.round((at(macd, x) - y) * 0.85);
    bars += `<path d="M${X(x)} 658v${d || 1}" stroke="${d < 0 ? "#e80000" : "#00d800"}" stroke-width="1.200"/>`;
  });
  put("macd", 590, bars + line(avg, "#009098") + line(macd, "#b89600") + level(658.5, "#c000c0") + box(594));
  put("macdAxis", 590, `<path d="M0 613h2" stroke="#666"/><text x="4" y="617" fill="#f0f000">900.00</text>` + tag(642, 12, "#0099a8", "182.83", "#033") + tag(651, 12, "#e800e8", "0.00", "#303") + `<path d="M0 663.5h65" stroke="#fff"/>` + tag(674, 13, "#ff5a5a", "-468.29", "#fff", 48));

  put("adx", 702, level(757.5, "#00d000") + level(774.5, "#b000b0") + line(adx, "#d8d800") + box(706));
  put("adxAxis", 702, `<path d="M0 746h2" stroke="#666"/><text x="4" y="750" fill="#f0f000">36.00</text>` + tag(750, 12, "#fff", "30.00", "#222") + tag(766, 13, "#fff", "20.00", "#222"));

  let d = "";
  dates.forEach(([t, x]) => {
    const p = +X(x) + 3;
    d += `<path d="M${p} 799v3" stroke="#555"/><text x="${p}" y="812" text-anchor="middle" fill="#e8e8e8">${t}</text>`;
  });
  const c = +X(820) + 3;
  d += `<rect x="${c - 36}" y="801" width="72" height="14" fill="#a00000"/><text x="${c - 4}" y="812" text-anchor="middle" fill="#ffd8d8">2021-08-03</text>`;
  put("dates", 799, d);
}

// place on the overlay that covers the whole window
const P = v => (11 + (v - LEFT) * scale).toFixed(1);

// a box with a pointer that starts on one of its edges
const callout = (x, y, w, h, ax, ay, tx, ty, bx, by, text) =>
  `<path d="M${P(ax)} ${ay}L${P(tx)} ${ty}L${P(bx)} ${by}z" fill="#5b9bd5" stroke="#2e5f8c" stroke-width="1"/>
    <rect x="${P(x)}" y="${y}" width="${w}" height="${h}" fill="#5b9bd5" stroke="#2e5f8c"/>
    <path d="M${P(ax)} ${ay}L${P(bx)} ${by}" stroke="#5b9bd5" stroke-width="2"/>
    <text class="callout" x="${+P(x) + 9}" y="${y + 19}">${text}</text>`;

function drawNotes() {
  let s = `<path d="M${P(813)} 115L${P(817)} 474" stroke="#a03c3c" stroke-width="1.500"/>`;
  s += callout(234, 165, 104, 31, 253, 165, 107, 76, 277, 165, "zn1工作区");
  s += callout(895, 357, 77, 40, 895, 382, 822, 421, 895, 390, "画线");
  s += callout(1235, 360, 168, 38, 1334, 398, 1604, 792, 1375, 398, "界面2022-10-10");
  s += `<text class="mark" x="${P(1537)}" y="802">激活 Windows</text>
    <text class="mark-small" x="${P(1537)}" y="820">转到“设置”以激活Windows。</text>
    <text class="mark" x="${P(1604)}" y="826">激活 Windows</text>`;
  put("notes", 0, s);
}

function draw() {
  scale = document.getElementById("kdj").getBoundingClientRect().width / (RIGHT - LEFT + 2);
  drawPrice();
  drawStudies();
  drawNotes();
}

window.addEventListener("resize", draw);
draw();
```
